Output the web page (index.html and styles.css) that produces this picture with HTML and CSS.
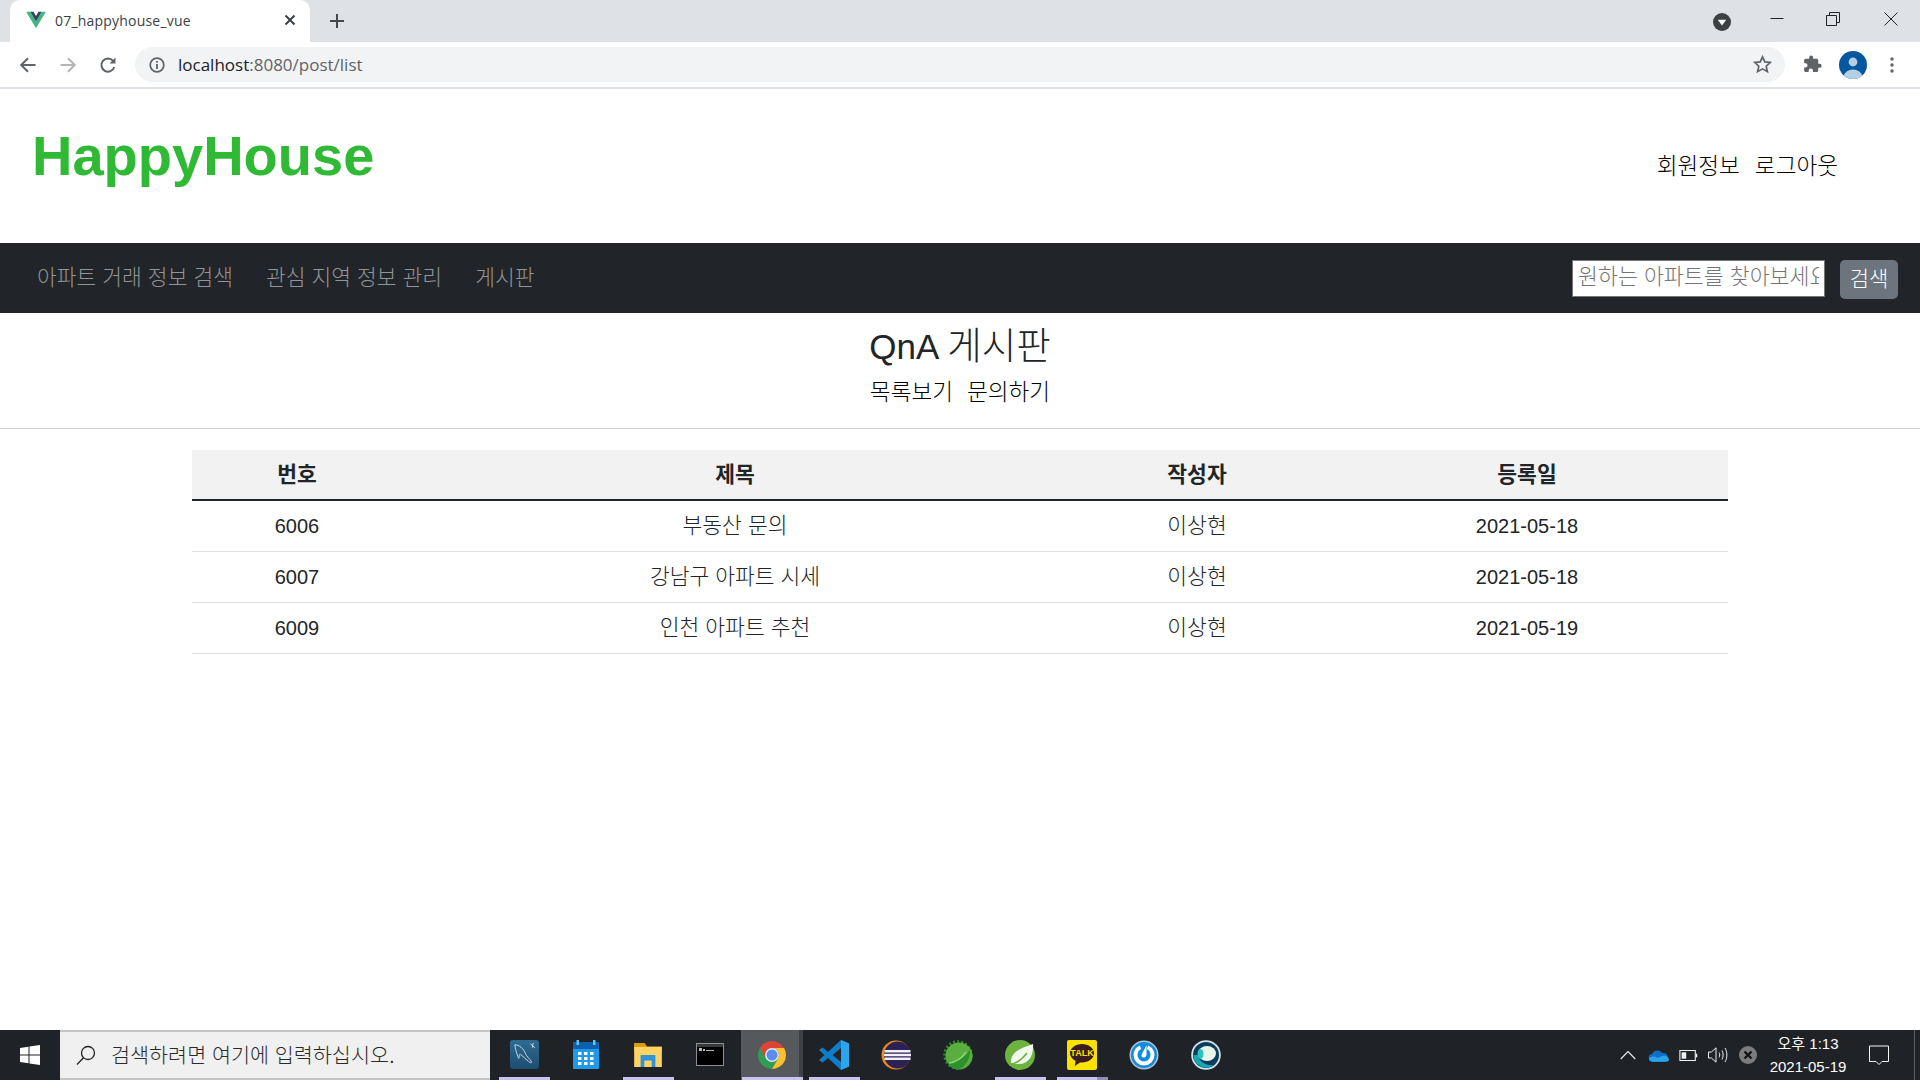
FILE: index.html
```html
<!DOCTYPE html>
<html lang="ko">
<head>
<meta charset="utf-8">
<title>07_happyhouse_vue</title>
<link rel="stylesheet" href="styles.css">
</head>
<body>
<div class="screen">
  <div class="tabstrip">
    <div class="tab">
      <svg class="fav" viewBox="0 0 24 22" width="20" height="18"><path fill="#41b883" d="M0 1h5l7 12L19 1h5L12 21z"/><path fill="#35495e" d="M5 1h4l3 5 3-5h4l-7 12z"/></svg>
      <span class="tab-title">07_happyhouse_vue</span>
      <svg class="tab-x" viewBox="0 0 12 12" width="12" height="12"><path d="M1.500 1.500l9 9M10.500 1.500l-9 9" stroke="#3c4043" stroke-width="2" fill="none"/></svg>
    </div>
    <svg class="plus" viewBox="0 0 16 16" width="16" height="16"><path d="M8 1v14M1 8h14" stroke="#45484c" stroke-width="2" fill="none"/></svg>
    <div class="spacer"></div>
    <svg class="profile-down" viewBox="0 0 18 18" width="18" height="18"><circle cx="9" cy="9" r="9" fill="#3c4043"/><path d="M4.800 6.800h8.400L9 12.600z" fill="#fff"/></svg>
    <div class="winctl">
      <svg viewBox="0 0 14 14" width="14" height="14"><path d="M0.500 6.500h13" stroke="#222" fill="none"/></svg>
      <svg viewBox="0 0 14 14" width="14" height="14"><path d="M.5 3.500h10v10H.5zM3.500 3.500v-3h10v10h-3" stroke="#222" fill="none"/></svg>
      <svg class="win-close" viewBox="0 0 14 14" width="14" height="14"><path d="M.5.5l13 13M13.500.5l-13 13" stroke="#222" fill="none"/></svg>
    </div>
  </div>
  <div class="toolbar">
    <svg class="tb-ic" viewBox="0 0 18 18" width="18" height="18"><path d="M16.500 9H2.500M9 2.200L2.200 9 9 15.800" stroke="#5f6368" stroke-width="2" fill="none"/></svg>
    <svg class="tb-ic" viewBox="0 0 18 18" width="18" height="18"><path d="M1.500 9h14M9 2.200L15.800 9 9 15.800" stroke="#b4b6b9" stroke-width="2" fill="none"/></svg>
    <svg class="tb-ic" viewBox="0 0 18 18" width="18" height="18"><path d="M15.300 11a6.600 6.600 0 1 1-1.200-6.200" stroke="#5f6368" stroke-width="2" fill="none"/><path d="M16.500 1.500v6h-6z" fill="#5f6368"/></svg>
    <div class="omnibox">
      <svg viewBox="0 0 16 16" width="16" height="16"><circle cx="8" cy="8" r="6.800" stroke="#5f6368" stroke-width="1.700" fill="none"/><path d="M7.100 7h1.800v5H7.100zM7.100 4h1.800v1.800H7.100z" fill="#5f6368"/></svg>
      <span class="url"><span class="url-host">localhost</span>:8080/post/list</span>
      <svg class="star" viewBox="0 0 20 20" width="19" height="19"><path d="M10 2l2.400 5.300 5.800.6-4.300 3.900 1.200 5.700L10 14.600l-5.100 2.900 1.200-5.700L1.800 7.900l5.800-.6z" stroke="#5f6368" stroke-width="1.800" fill="none"/></svg>
    </div>
    <svg class="puzzle" viewBox="0 0 20 20" width="19" height="19"><path fill="#5f6368" d="M17.400 9.200H16V5.500c0-.9-.7-1.600-1.600-1.600h-3.700V2.500a2.100 2.100 0 0 0-4.200 0v1.400H2.800c-.9 0-1.600.7-1.600 1.600v3.100h1.300a2.300 2.300 0 0 1 0 4.600H1.200v3.100c0 .9.700 1.600 1.600 1.600h3.100v-1.300a2.300 2.300 0 0 1 4.600 0v1.300h3.900c.9 0 1.600-.7 1.600-1.600v-2.800h1.400a2.100 2.100 0 0 0 .2-4.200z"/></svg>
    <svg class="avatar" viewBox="0 0 28 28" width="28" height="28"><defs><clipPath id="av"><circle cx="14" cy="14" r="14"/></clipPath></defs><circle cx="14" cy="14" r="14" fill="#04569e"/><g clip-path="url(#av)"><circle cx="14" cy="11" r="4.400" fill="#b4d0e7"/><ellipse cx="14" cy="25" rx="9" ry="6.500" fill="#b4d0e7"/></g></svg>
    <svg class="dots" viewBox="0 0 4 16" width="4" height="16"><circle cx="2" cy="2" r="1.700" fill="#5f6368"/><circle cx="2" cy="8" r="1.700" fill="#5f6368"/><circle cx="2" cy="14" r="1.700" fill="#5f6368"/></svg>
  </div>
  <main class="page">
    <header class="site-header">
      <h1 class="brand">HappyHouse</h1>
      <div class="user-links"><a>회원정보</a><a>로그아웃</a></div>
    </header>
    <nav class="navbar">
      <a>아파트 거래 정보 검색</a>
      <a>관심 지역 정보 관리</a>
      <a>게시판</a>
      <div class="spacer"></div>
      <input class="search" placeholder="원하는 아파트를 찾아보세요">
      <button class="search-btn">검색</button>
    </nav>
    <section class="board-head">
      <h3>QnA <span class="h-ko">게시판</span></h3>
      <div class="board-links"><a>목록보기</a><a>문의하기</a></div>
    </section>
    <hr class="rule">
    <table class="board">
      <thead>
        <tr><th class="c-no">번호</th><th class="c-title">제목</th><th class="c-writer">작성자</th><th class="c-date">등록일</th></tr>
      </thead>
      <tbody>
        <tr><td>6006</td><td class="ko">부동산 문의</td><td class="ko">이상현</td><td>2021-05-18</td></tr>
        <tr><td>6007</td><td class="ko">강남구 아파트 시세</td><td class="ko">이상현</td><td>2021-05-18</td></tr>
        <tr><td>6009</td><td class="ko">인천 아파트 추천</td><td class="ko">이상현</td><td>2021-05-19</td></tr>
      </tbody>
    </table>
  </main>
  <footer class="taskbar">
    <div class="start"><svg viewBox="0 0 20 20" width="20" height="20"><path fill="#fff" d="M0 3l8.500-1.200v7.700H0zM9.500 1.600L20 0v9.500H9.500zM0 10.500h8.500v7.700L0 17zM9.500 10.500H20V20L9.500 18.400z"/></svg></div>
    <div class="tsearch">
      <svg viewBox="0 0 20 20" width="20" height="20"><circle cx="12" cy="8" r="6.500" stroke="#222" stroke-width="1.300" fill="none"/><path d="M7.500 12.700L1 19.500" stroke="#222" stroke-width="1.300" fill="none"/></svg>
      <span>검색하려면 여기에 입력하십시오.</span>
    </div>
    <div class="apps">
      <div class="app open"><svg viewBox="0 0 30 30" width="29" height="29"><defs><linearGradient id="my" x1="0" y1="0" x2="0" y2="1"><stop offset="0" stop-color="#2e6b93"/><stop offset="1" stop-color="#1d4e70"/></linearGradient></defs><rect x="0" y="0" width="30" height="30" rx="3" fill="url(#my)"/><path d="M5 5c5 0 9 4 11 9 1 3 4 5 6 8 1 2-1 2-3 0-3-2-5-5-8-7-2-2-1 4-2 4-1-2-3-7-4-14zM21 4l5 4M24 3l-1 5" stroke="#cfd9e2" stroke-width="1" fill="none"/></svg></div>
      <div class="app"><svg viewBox="0 0 26 29" width="26" height="29"><rect x="0" y="2" width="26" height="27" rx="1" fill="#1e9be6"/><rect x="0" y="2" width="26" height="7" fill="#1160ad"/><path d="M3.500 0h2.500v5H3.500zM20 0h2.500v5H20z" fill="#5cc6f5"/><path fill="#fff" d="M5 12h3.500v3H5zM11 12h3.500v3H11zM17 12h3.500v3H17zM5 17h3.500v3H5zM11 17h3.500v3H11zM17 17h3.500v3H17zM5 22h3.500v3H5zM11 22h3.500v3H11zM17 22h3.500v3H17z"/></svg></div>
      <div class="app open"><svg viewBox="0 3 30 26" width="28" height="24"><path d="M0 3h11l3 4h16v5H0z" fill="#d89c10"/><path d="M0 7h30v22H0z" fill="#fcd364"/><path d="M0 3h11l3 4H0z" fill="#d89c10"/><path d="M7 16h16v13H7z" fill="#2f94dc"/><path d="M11 22h8v7h-8z" fill="#fcd364"/></svg></div>
      <div class="app"><svg viewBox="0 0 28 23" width="28" height="23"><rect width="28" height="23" fill="#8f8f8f"/><rect x="1" y="1" width="26" height="3" fill="#3a3a3a"/><rect x="1" y="4" width="26" height="18" fill="#000"/><path d="M3 5h3v3H3zM7 6h2v2H7zM10 7h8v1h-8z" fill="#bbb"/></svg></div>
      <div class="app active open"><svg viewBox="0 0 30 30" width="30" height="30"><path d="M15 8H27.120A14 14 0 0 0 2.880 8L8.940 18.500A7 7 0 0 1 15 8z" fill="#dc4437"/><path d="M8.940 18.500L2.880 8A14 14 0 0 0 15 29L21.060 18.500A7 7 0 0 1 8.940 18.500z" fill="#2f9e52"/><path d="M21.060 18.500L15 29A14 14 0 0 0 27.120 8H15A7 7 0 0 1 21.060 18.500z" fill="#fbc02d"/><circle cx="15" cy="15" r="7" fill="#e4e8f5"/><circle cx="15" cy="15" r="5.500" fill="#5a8df0"/></svg></div>
      <div class="app open"><svg viewBox="0 0 30 30" width="30" height="30"><path d="M22 0l8 3.500v23L22 30 9 18l-5.500 4.500L0 20l5.500-5L0 10l3.500-2.500L9 12z" fill="#0f7ec9"/><path d="M22 0l8 3.500v23L22 30z" fill="#2aa5ee"/><path d="M22 8v14l-8.500-7z" fill="#22262a"/></svg></div>
      <div class="app"><svg viewBox="0 0 30 30" width="30" height="30"><circle cx="15" cy="15" r="14.500" fill="#f08a1e"/><circle cx="16.500" cy="15" r="13.500" fill="#2c2255"/><path fill="#f2f0f8" d="M3.500 10h26v2.400h-26zM3 13.800h27v2.400H3zM3.500 17.600h26V20h-26z"/></svg></div>
      <div class="app"><svg viewBox="0 0 30 30" width="30" height="30"><circle cx="15" cy="15" r="13" fill="none" stroke="#2d8a2a" stroke-width="3.500" stroke-dasharray="2 2"/><circle cx="16" cy="16" r="13.500" fill="#5aae40"/><path d="M4 22C13 22 23 18 27 9c1 8-4 18-11 20-5 1-9-2-12-7z" fill="#2f912e"/><path d="M6 23c7-1 13-5 17-11" stroke="#8ed26a" stroke-width="1.500" fill="none"/></svg></div>
      <div class="app open"><svg viewBox="0 0 30 30" width="30" height="30"><circle cx="15" cy="15" r="15" fill="#6db33f"/><path d="M6 23C5 13 15 8 28 4c1 11-4 20-14 20-3 0-5-.5-8-1z" fill="#f3f8ef"/><path d="M4 25c5-1 12-4 18-12" stroke="#6db33f" stroke-width="1.500" fill="none"/></svg></div>
      <div class="app open stacked"><div class="talk"><svg viewBox="0 0 30 30" width="24" height="25"><path d="M15 2C7 2 0 7 0 13.500c0 4 3 7.500 7 9.500l-1 6.500 6.500-4.500h2.500c8 0 15-5 15-11.500S23 2 15 2z" fill="#3a1d1d"/></svg><span class="talk-t">TALK</span></div></div>
      <div class="app"><svg viewBox="0 0 30 30" width="30" height="30"><circle cx="15" cy="15" r="14.500" fill="#b4c6d6"/><circle cx="15" cy="15" r="13" fill="#0f8be0"/><circle cx="15" cy="15" r="8.500" fill="none" stroke="#fff" stroke-width="4" stroke-dasharray="46 7.400" stroke-dashoffset="-3.500" transform="rotate(-90 15 15)"/><path d="M17.500 5v10a2.800 2.800 0 0 1-5 1.500c-.6-1.800 3-7 5-11.500z" fill="#fff"/></svg></div>
      <div class="app"><svg viewBox="0 0 30 30" width="30" height="30"><circle cx="15" cy="15" r="14.800" fill="#cfe6ea"/><circle cx="15" cy="15" r="13" fill="#0e3c5c"/><path d="M2.500 15a12.500 12.500 0 0 0 20 10c-7 1-14-3-16-10z" fill="#16a7b4"/><ellipse cx="16" cy="13.500" rx="9" ry="7.500" fill="#e9f5e8"/><ellipse cx="9.500" cy="14" rx="3" ry="5" fill="#2ac2c4"/></svg></div>
    </div>
    <div class="spacer"></div>
    <div class="tray">
      <svg viewBox="0 0 16 10" width="16" height="10"><path d="M.7 9L8 1.500 15.300 9" stroke="#f0f0f0" stroke-width="1.100" fill="none"/></svg>
      <svg viewBox="0 0 22 13" width="21" height="13"><path d="M5 13a4 4 0 0 1-.5-8A6 6 0 0 1 15 4a4.500 4.500 0 0 1 2.500 9z" fill="#0f6fc6"/><path d="M5 13c-3 0-4-2-4-3 2-3 6-3 9-1l5-2c3-1 7 1 7 4 0 1-1 2-3 2z" fill="#2aa2ec"/></svg>
      <svg viewBox="0 0 20 12" width="19" height="11"><path d="M.6.6h16.800v10.800H.6z" stroke="#f0f0f0" stroke-width="1.200" fill="none"/><path d="M2.500 2.500h5v7h-5z" fill="#f0f0f0"/><path d="M18 4h1.500v4H18z" fill="#f0f0f0"/></svg>
      <svg viewBox="0 0 21 16" width="21" height="16"><path d="M.5 5h3L8 .8v14.400L3.500 11h-3z" stroke="#f0f0f0" fill="none"/><path d="M11 5.500c1 1.500 1 3.500 0 5M14 3.500c1.500 3 1.500 6 0 9M17 1c2.500 4 2.500 10 0 14" stroke="#f0f0f0" fill="none"/></svg>
      <svg viewBox="0 0 18 18" width="18" height="18"><circle cx="9" cy="9" r="9" fill="#7c7c7c"/><path d="M5.500 5.500l7 7M12.500 5.500l-7 7" stroke="#111" stroke-width="2.200"/></svg>
    </div>
    <div class="clock"><span>오후 1:13</span><span>2021-05-19</span></div>
    <div class="notify"><svg viewBox="0 0 20 20" width="20" height="20"><path d="M.5 1h19v15.500h-6.500L10 19.500l-3-3H.5z" stroke="#f5f5f5" fill="none"/></svg></div>
    <div class="peek"></div>
  </footer>
</div>
</body>
</html>
```

FILE: styles.css
```css
* { box-sizing: border-box; }
html, body { margin: 0; height: 100%; overflow: hidden; background: #fff; }
body { font-family: "Liberation Sans", "Noto Sans CJK KR", sans-serif; color: #212529; font-size: 20px; font-weight: 300; }
svg { display: block; flex: none; }
.spacer { flex: 1; }
.screen { height: 1080px; display: flex; flex-direction: column; }

.tabstrip { height: 42px; background: #dee1e6; display: flex; align-items: center; padding-left: 10px; }
.tab { width: 300px; height: 42px; background: #fff; border-radius: 10px 10px 0 0; display: flex; align-items: center; padding: 0 14px 2px 16px; }
.tab-title { flex: 1; margin-left: 9px; font: 14px "Open Sans", sans-serif; color: #3c4043; letter-spacing: .2px; }
.plus { margin-left: 19px; }
.profile-down { margin-right: 39px; margin-top: 1px; }
.winctl { display: flex; gap: 42px; padding-right: 22px; margin-top: -5px; }
.win-close { margin-left: 2px; }

.toolbar { height: 47px; border-bottom: 2px solid #dee1e6; display: flex; align-items: center; padding: 0 22px 0 19px; }
.tb-ic { margin-right: 22px; }
.toolbar .tb-ic:nth-child(3) { margin-right: 18px; }
.omnibox { width: 1650px; height: 35px; background: #f1f3f4; border-radius: 18px; display: flex; align-items: center; padding: 0 13px 0 14px; }
.url { flex: 1; margin-left: 13px; font: 17px "Open Sans", sans-serif; color: #5f6368; }
.url-host { color: #202124; }
.puzzle { margin-left: 18px; }
.avatar { margin-left: 17px; }
.dots { margin-left: 23px; }

.page { flex: 1; min-height: 0; }
.site-header { height: 154px; display: flex; align-items: center; justify-content: space-between; padding: 0 82px 0 32px; }
.brand { margin: 0 0 20px; font-size: 56px; font-weight: 700; line-height: 1.2; color: #2fb935; }
.user-links { display: flex; gap: 15px; margin-bottom: 4px; font-size: 22.6px; color: #000; }

.navbar { height: 70px; background: #212529; display: flex; align-items: center; gap: 33px; padding: 0 22px 0 37px; font-size: 21.5px; color: #929496; }
.navbar a { padding-bottom: 6px; }
.search { width: 253px; height: 37px; margin-right: -18px; padding: 0 5px 3px; border: 1px solid #767676; background: #fff; font: 300 21.7px "Liberation Sans", "Noto Sans CJK KR", sans-serif; }
.search::placeholder { color: #757575; }
.search-btn { width: 58px; height: 39px; margin-top: 2px; background: #6c757d; color: #fff; border: 0; border-radius: 5px; font: 300 21px "Liberation Sans", "Noto Sans CJK KR", sans-serif; padding: 0 0 5px; }

.board-head { text-align: center; height: 115px; padding-top: 12px; }
.board-head h3 { margin: 0; font-size: 35px; font-weight: 400; line-height: 42px; }
.h-ko { font-size: 37.5px; font-weight: 300; }
.board-links { display: flex; justify-content: center; gap: 14px; margin-top: 9px; font-size: 22.6px; color: #000; line-height: 32px; }
.rule { margin: 0; border: 0; border-top: 1px solid #d0d0d0; }
.board { width: 1536px; margin: 21px auto 0; border-collapse: collapse; table-layout: fixed; }
.board th { height: 50px; background: #f2f2f2; border-bottom: 2px solid #212529; font-weight: 700; font-size: 21.5px; text-align: center; padding: 0 0 4px; }
.board td { height: 51px; border-bottom: 1px solid #dee2e6; font-size: 20px; text-align: center; padding: 2px 0 0; }
.board td.ko { font-size: 21.5px; padding: 0 0 4px; }
.c-no { width: 210px; }
.c-title { width: 666px; }
.c-writer { width: 258px; }
.c-date { width: 402px; }

.taskbar { height: 50px; background: #1f2327; display: flex; align-items: center; color: #fff; }
.start { width: 60px; display: flex; justify-content: center; }
.tsearch { width: 430px; height: 50px; background: #f0f0f0; border-top: 2px solid #c4c4c4; border-bottom: 2px solid #c4c4c4; display: flex; align-items: center; gap: 15px; padding: 0 0 2px 16px; font-size: 20.7px; color: #2a2a2a; }
.tsearch svg { margin-top: 2px; }
.apps { display: flex; margin-left: 3px; height: 50px; }
.app { width: 62px; height: 50px; display: flex; align-items: center; justify-content: center; position: relative; padding-bottom: 1px; }
.app.open::after { content: ""; position: absolute; left: 6px; right: 5px; bottom: 0; height: 3px; background: #c6c3f0; }
.app.active { background: #55595c; box-shadow: inset -4px 0 0 #3d4145; }
.app.active::after { left: 1px; right: 0; }
.app.stacked::before { content: ""; position: absolute; right: 5px; width: 11px; bottom: 0; height: 3px; background: #908dbb; z-index: 1; }
.talk { width: 30px; height: 30px; background: #fae100; border-radius: 2px; display: flex; align-items: center; justify-content: center; position: relative; }
.talk-t { position: absolute; left: 0; right: 0; top: 8px; text-align: center; font-size: 9px; line-height: 11px; font-weight: 700; color: #fae100; }
.tray { display: grid; grid-template-columns: repeat(5, 30px); justify-items: center; align-items: center; }
.clock { display: flex; flex-direction: column; align-items: center; font-size: 15px; line-height: 23px; width: 82px; margin: 0 15px 0 4px; font-weight: 400; }
.notify { width: 30px; display: flex; justify-content: center; }
.peek { width: 1px; height: 50px; background: #5a5d60; margin: 0 5px 0 20px; }
```
